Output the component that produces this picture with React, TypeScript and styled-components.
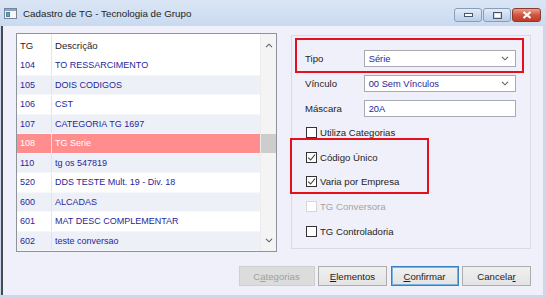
import React from 'react';
import styled, {createGlobalStyle} from 'styled-components';

const GlobalStyle = createGlobalStyle`
  html, body {
    margin: 0;
    padding: 0;
    background: #c7d8ee;
  }
  * {
    box-sizing: border-box;
  }
`;

const FONT = `'Liberation Sans', Arial, sans-serif`;

const Window = styled.div`
  width: 546px;
  height: 298px;
  display: flex;
  flex-direction: column;
  background: #c8d9ef;
  font-family: ${FONT};
  overflow: hidden;
`;

const TitleBar = styled.div`
  height: 26px;
  display: flex;
  align-items: center;
  padding: 0 5px 0 4px;
  background: linear-gradient(#dae6f5, #c9daf0);
`;

const TitleText = styled.span`
  margin-left: 6px;
  font-size: 9.8px;
  color: #1e1e1e;
  flex: 1;
`;

const CaptionButtons = styled.div`
  display: flex;
  gap: 1px;
  align-self: flex-start;
  margin-top: 8px;
`;

const CaptionButton = styled.div<{close?: boolean}>`
  width: ${props => (props.close ? '29px' : '28px')};
  height: 14px;
  border: 1px solid ${props => (props.close ? '#8d3a2e' : '#8a9cb8')};
  border-radius: 3px;
  display: flex;
  align-items: center;
  justify-content: center;
  background: ${props =>
    props.close
      ? 'linear-gradient(#e8a08f, #d2553f 50%, #c03a26)'
      : 'linear-gradient(#e3ecf8, #cddcf0 50%, #bccfe8)'};
`;

const Client = styled.div`
  flex: 1;
  margin: 0 3px 3px 1px;
  border-left: 2px solid #4a4a4a;
  background: #eff0f9;
  display: flex;
  flex-direction: column;
  padding: 7px 12px 0 13px;
`;

const TopRow = styled.div`
  display: flex;
  align-items: flex-start;
  gap: 14px;
`;

const ListBox = styled.div`
  width: 262px;
  height: 219px;
  border: 1px solid #8e939c;
  background: #ffffff;
  display: flex;
`;

const Table = styled.div`
  flex: 1;
  display: flex;
  flex-direction: column;
`;

const Row = styled.div<{tone: 'white' | 'blue' | 'selected'; header?: boolean}>`
  height: ${props => (props.header ? '22px' : '19.5px')};
  display: flex;
  align-items: center;
  font-size: ${props => (props.header ? '9.6px' : '9px')};
  color: ${props =>
    props.header ? '#1e1e1e' : props.tone === 'selected' ? '#ffffff' : '#27279a'};
  background: ${props =>
    props.tone === 'selected' ? '#ff8d8d' : props.tone === 'blue' ? '#eef0f8' : '#ffffff'};
  border-bottom: ${props => (props.header ? 'none' : '1px solid #f6f7fb')};
`;

const Cell = styled.div<{first?: boolean}>`
  height: 100%;
  display: flex;
  align-items: center;
  padding-left: 3px;
  white-space: nowrap;
  ${props =>
    props.first
      ? `
    width: 35px;
    border-right: 1px solid #e4e4e4;
  `
      : `
    flex: 1;
  `}
`;

const ScrollBar = styled.div`
  width: 16px;
  background: #f4f4f4;
  border-left: 1px solid #ececec;
  display: flex;
  flex-direction: column;
  align-items: center;
`;

const ScrollArrow = styled.div`
  height: 22px;
  width: 100%;
  display: flex;
  align-items: center;
  justify-content: center;
`;

const ScrollTrack = styled.div`
  flex: 1;
  width: 100%;
  padding-top: 78px;
`;

const ScrollThumb = styled.div`
  height: 19px;
  background: #cdcdcd;
`;

const GroupBox = styled.div`
  position: relative;
  margin-top: 2px;
  width: 240px;
  height: 214px;
  border: 1px solid #d9dbe3;
  padding: 14px 14px 0 13px;
  display: flex;
  flex-direction: column;
`;

const FieldRow = styled.div`
  display: flex;
  align-items: center;
  height: 17px;
  margin-bottom: 8px;
`;

const FieldLabel = styled.span`
  width: 59px;
  font-size: 9.6px;
  color: #1e1e1e;
`;

const Field = styled.div`
  width: 153px;
  height: 17px;
  border: 1px solid #a9abb2;
  background: #ffffff;
  display: flex;
  align-items: center;
  justify-content: space-between;
  padding: 0 6px 0 4px;
  font-size: 9.3px;
  color: #27279a;
`;

const CheckList = styled.div`
  margin-top: -5px;
  display: flex;
  flex-direction: column;
`;

const CheckRow = styled.div<{disabled?: boolean}>`
  height: 24.8px;
  display: flex;
  align-items: center;
  gap: 3px;
  padding-left: 1px;
  font-size: 9.6px;
  color: ${props => (props.disabled ? '#a5a5a5' : '#1e1e1e')};
`;

const CheckBox = styled.div<{disabled?: boolean}>`
  width: 11px;
  height: 11px;
  border: 1px solid ${props => (props.disabled ? '#d6d6d6' : '#333333')};
  background: #ffffff;
  display: flex;
  align-items: center;
  justify-content: center;
`;

const Highlight = styled.div<{left: number; top: number; w: number; h: number}>`
  position: absolute;
  left: ${props => props.left}px;
  top: ${props => props.top}px;
  width: ${props => props.w}px;
  height: ${props => props.h}px;
  border: 2.5px solid #e5101c;
  pointer-events: none;
`;

const ButtonRow = styled.div`
  display: flex;
  justify-content: flex-end;
  gap: 3.5px;
  margin-top: 14px;
`;

const Button = styled.div<{disabled?: boolean; primary?: boolean; w: number}>`
  width: ${props => props.w}px;
  height: 20px;
  display: flex;
  align-items: center;
  justify-content: center;
  font-size: 9.6px;
  color: ${props => (props.disabled ? '#a0a0a0' : '#1e1e1e')};
  border: 1px solid
    ${props => (props.disabled ? '#cfcfcf' : props.primary ? '#3a7fbf' : '#adadad')};
  background: ${props =>
    props.disabled ? '#dcdcdc' : 'linear-gradient(#f0f0f0, #e3e3e3)'};
  ${props => props.primary && 'box-shadow: inset 0 0 0 1px #7ab3e0;'}
`;

const rows = [
  ['104', 'TO RESSARCIMENTO'],
  ['105', 'DOIS CODIGOS'],
  ['106', 'CST'],
  ['107', 'CATEGORIA TG 1697'],
  ['108', 'TG Serie'],
  ['110', 'tg os 547819'],
  ['520', 'DDS TESTE Mult. 19 - Div. 18'],
  ['600', 'ALCADAS'],
  ['601', 'MAT DESC COMPLEMENTAR'],
  ['602', 'teste conversao'],
];

const Chevron = ({up}: {up?: boolean}) => (
  <svg width="8" height="5" viewBox="0 0 8 5">
    <path
      d={up ? 'M1 4.2 L4 1.2 L7 4.2' : 'M1 0.8 L4 3.8 L7 0.8'}
      fill="none"
      stroke="#606060"
      strokeWidth="1.1"
    />
  </svg>
);

const Check = () => (
  <svg width="9" height="9" viewBox="0 0 9 9">
    <path d="M1.2 4.6 L3.6 7 L8 1.6" fill="none" stroke="#444" strokeWidth="1.1" />
  </svg>
);

function App() {
  return (
    <>
      <GlobalStyle />
      <Window>
        <TitleBar>
          <svg width="13" height="11" viewBox="0 0 13 11">
            <rect x="0.5" y="0.5" width="12" height="10" fill="#f4f6f9" stroke="#7b8594" />
            <rect x="1" y="1" width="11" height="2" fill="#8aa3c4" />
            <rect x="2" y="4" width="4" height="5" fill="#4a7fb5" />
            <rect x="3" y="5" width="2" height="3" fill="#6bb06a" />
          </svg>
          <TitleText>Cadastro de TG - Tecnologia de Grupo</TitleText>
          <CaptionButtons>
            <CaptionButton>
              <svg width="9" height="4" viewBox="0 0 9 4">
                <rect x="0.5" y="0.5" width="8" height="3" fill="#fff" stroke="#4a5568" />
              </svg>
            </CaptionButton>
            <CaptionButton>
              <svg width="9" height="7" viewBox="0 0 9 7">
                <rect x="0.5" y="0.5" width="8" height="6" fill="none" stroke="#4a5568" />
                <rect x="2" y="2" width="5" height="3" fill="#fff" />
              </svg>
            </CaptionButton>
            <CaptionButton close>
              <svg width="10" height="8" viewBox="0 0 10 8">
                <path d="M1.5 1 L8.5 7 M8.5 1 L1.5 7" stroke="#fff" strokeWidth="2.2" />
              </svg>
            </CaptionButton>
          </CaptionButtons>
        </TitleBar>
        <Client>
          <TopRow>
            <ListBox>
              <Table>
                <Row header tone="white">
                  <Cell first>TG</Cell>
                  <Cell>Descrição</Cell>
                </Row>
                {rows.map(([id, desc], i) => (
                  <Row key={id} tone={id === '108' ? 'selected' : i % 2 === 1 ? 'blue' : 'white'}>
                    <Cell first>{id}</Cell>
                    <Cell>{desc}</Cell>
                  </Row>
                ))}
              </Table>
              <ScrollBar>
                <ScrollArrow>
                  <Chevron up />
                </ScrollArrow>
                <ScrollTrack>
                  <ScrollThumb />
                </ScrollTrack>
                <ScrollArrow>
                  <Chevron />
                </ScrollArrow>
              </ScrollBar>
            </ListBox>
            <GroupBox>
              <FieldRow>
                <FieldLabel>Tipo</FieldLabel>
                <Field>
                  Série
                  <Chevron />
                </Field>
              </FieldRow>
              <FieldRow>
                <FieldLabel>Vínculo</FieldLabel>
                <Field>
                  00 Sem Vínculos
                  <Chevron />
                </Field>
              </FieldRow>
              <FieldRow>
                <FieldLabel>Máscara</FieldLabel>
                <Field>20A</Field>
              </FieldRow>
              <CheckList>
                <CheckRow>
                  <CheckBox />
                  Utiliza Categorias
                </CheckRow>
                <CheckRow>
                  <CheckBox>
                    <Check />
                  </CheckBox>
                  Código Único
                </CheckRow>
                <CheckRow>
                  <CheckBox>
                    <Check />
                  </CheckBox>
                  Varia por Empresa
                </CheckRow>
                <CheckRow disabled>
                  <CheckBox disabled />
                  TG Conversora
                </CheckRow>
                <CheckRow>
                  <CheckBox />
                  TG Controladoria
                </CheckRow>
              </CheckList>
              <Highlight left={3} top={2} w={229} h={35} />
              <Highlight left={-2} top={102} w={139} h={56} />
            </GroupBox>
          </TopRow>
          <ButtonRow>
            <Button disabled w={76}>
              C<u>a</u>tegorias
            </Button>
            <Button w={69}>
              <u>E</u>lementos
            </Button>
            <Button primary w={68}>
              <u>C</u>onfirmar
            </Button>
            <Button w={69}>
              Cancela<u>r</u>
            </Button>
          </ButtonRow>
        </Client>
      </Window>
    </>
  );
}

export default App;
